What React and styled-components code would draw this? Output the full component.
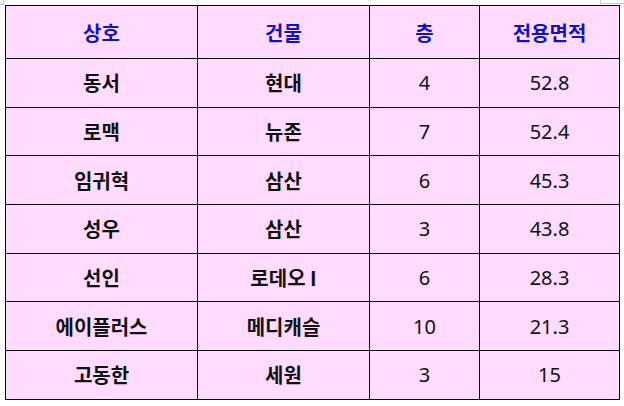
import styled, { createGlobalStyle } from "styled-components"

const GlobalStyle = createGlobalStyle`
  html, body {
    margin: 0;
    padding: 0;
    background: #ffffff;
  }
  body {
    font-family: "Noto Sans CJK KR", "Noto Sans", sans-serif;
  }
`

const Page = styled.div`
  position: relative;
  width: 624px;
  height: 406px;
  padding: 5px 0 0 5px;
  box-sizing: border-box;
`

const CornerMark = styled.span`
  position: absolute;
  top: 0;
  border-color: #c8c8c8;
  border-style: solid;
  border-width: 0;
  ${({ side }) =>
    side === "left"
      ? "left: 0; width: 3px; height: 4px; border-right-width: 1px; border-bottom-width: 1px;"
      : "right: 0; width: 23px; height: 3px; border-left-width: 1px; border-bottom-width: 1px;"}
`

const Table = styled.table`
  border-collapse: collapse;
  background: #ffdcff;
  table-layout: fixed;
  width: 614px;
`

const Col = styled.col`
  width: ${({ w }) => w}px;
`

const HeadCell = styled.th`
  border: 1px solid #000;
  height: 52px;
  padding: 0;
  text-align: center;
  color: #1010d0;
  font-size: 20px;
  font-weight: 700;
`

const Cell = styled.td`
  border: 1px solid #000;
  height: 47.7px;
  padding: 0;
  text-align: center;
  color: #111;
  font-size: 20px;
  font-weight: ${({ num }) => (num ? 400 : 700)};
  font-family: ${({ num }) =>
    num ? '"Noto Sans", "Noto Sans CJK KR", sans-serif' : "inherit"};
`

const rows = [
  ["동서", "현대", "4", "52.8"],
  ["로맥", "뉴존", "7", "52.4"],
  ["임귀혁", "삼산", "6", "45.3"],
  ["성우", "삼산", "3", "43.8"],
  ["선인", "로데오 I", "6", "28.3"],
  ["에이플러스", "메디캐슬", "10", "21.3"],
  ["고동한", "세원", "3", "15"],
]

const App = () => {
  return (
    <Page>
      <GlobalStyle />
      <CornerMark side="left" />
      <CornerMark side="right" />
      <Table>
        <colgroup>
          <Col w={192} />
          <Col w={172} />
          <Col w={110} />
          <Col w={140} />
        </colgroup>
        <thead>
          <tr>
            <HeadCell>상호</HeadCell>
            <HeadCell>건물</HeadCell>
            <HeadCell>층</HeadCell>
            <HeadCell>전용면적</HeadCell>
          </tr>
        </thead>
        <tbody>
          {rows.map((r) => (
            <tr key={r[0]}>
              <Cell>{r[0]}</Cell>
              <Cell>{r[1]}</Cell>
              <Cell num>{r[2]}</Cell>
              <Cell num>{r[3]}</Cell>
            </tr>
          ))}
        </tbody>
      </Table>
    </Page>
  )
}

export default App
